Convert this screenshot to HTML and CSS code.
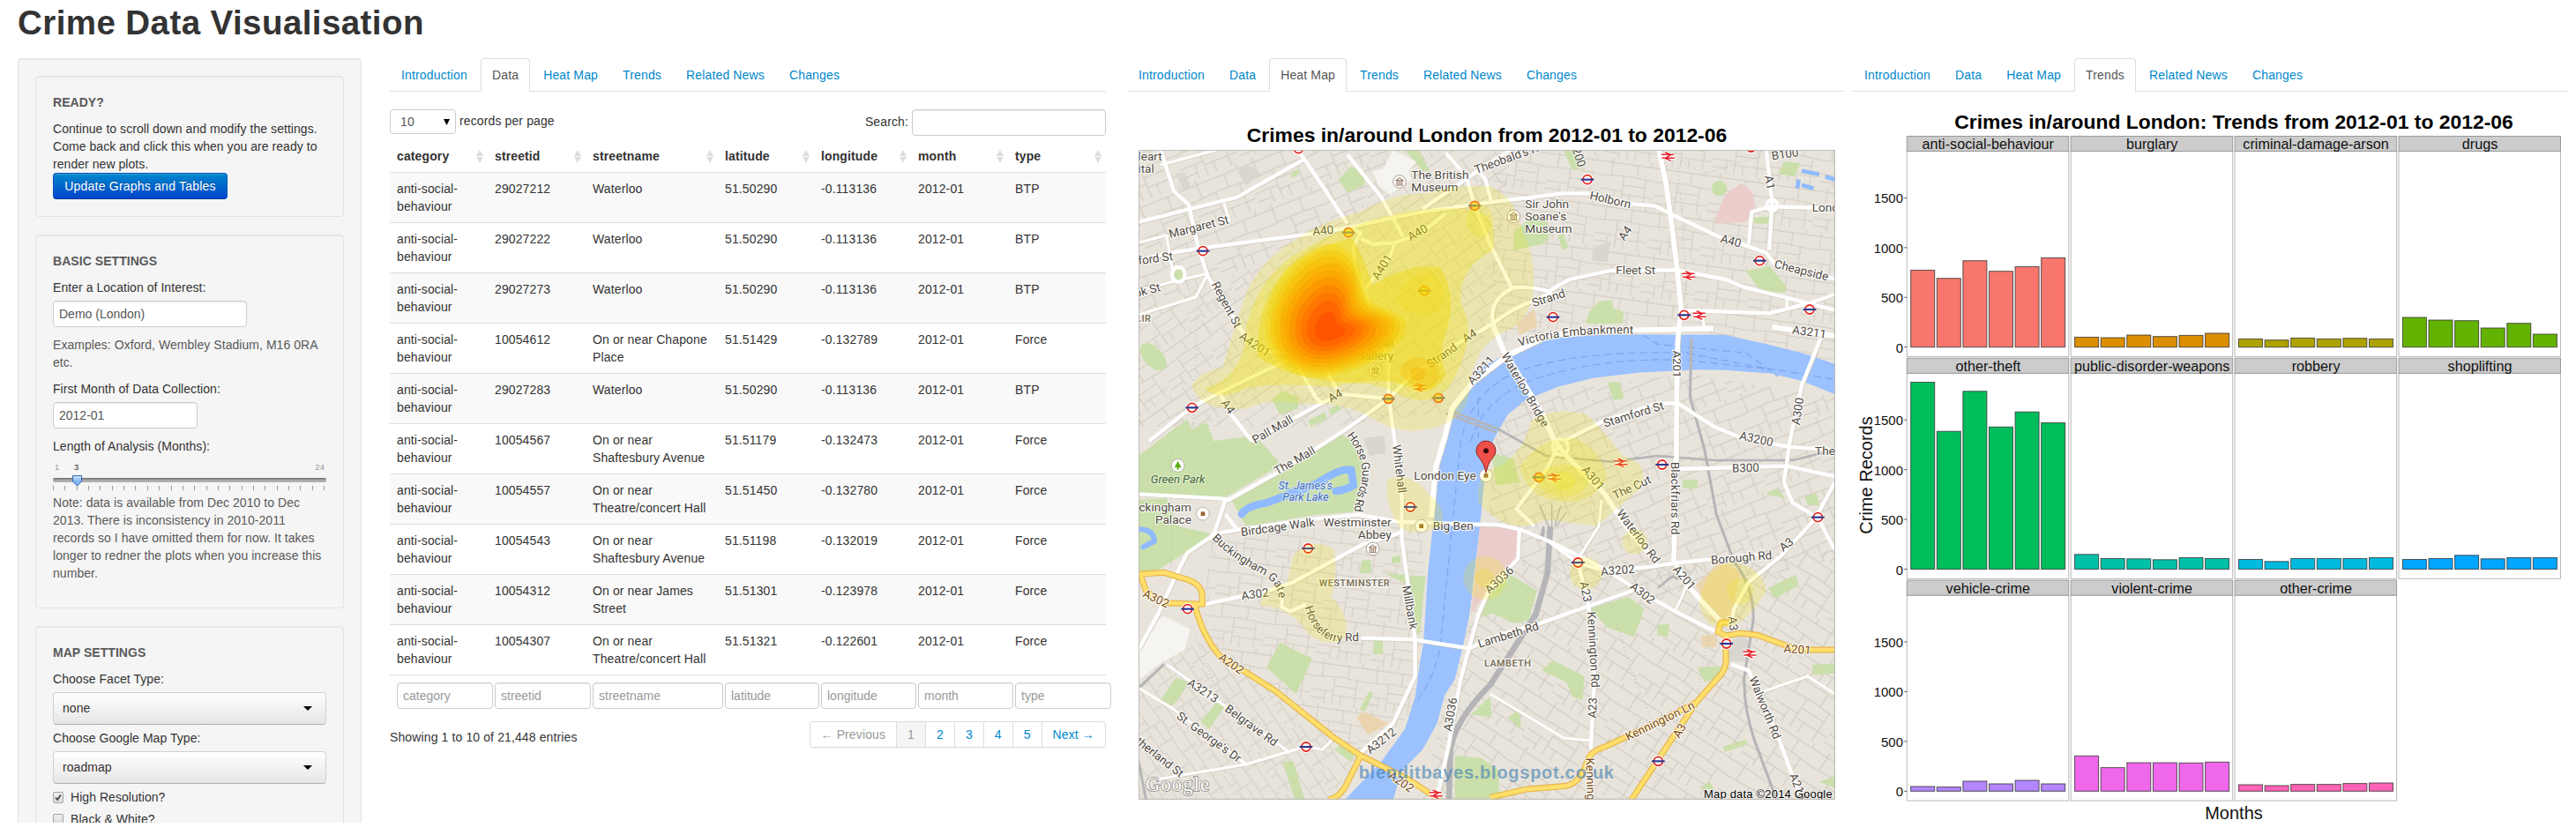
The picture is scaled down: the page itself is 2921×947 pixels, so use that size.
FILE: index.html
```html
<!DOCTYPE html>
<html lang="en">
<head>
<meta charset="utf-8">
<title>Crime Data Visualisation</title>
<link rel="stylesheet" href="styles.css">
</head>
<body>
<h1 class="page-title">Crime Data Visualisation</h1>
<main class="layout">
  <aside class="well sidebar">
    <section class="well">
      <p class="heading">READY?</p>
      <div>Continue to scroll down and modify the settings. Come back and click this when you are ready to render new plots.</div>
      <button class="btn-primary">Update Graphs and Tables</button>
    </section>
    <section class="well">
      <p class="heading">BASIC SETTINGS</p>
      <label>Enter a Location of Interest:</label>
      <input class="field location" type="text" value="Demo (London)">
      <p class="help">Examples: Oxford, Wembley Stadium, M16 0RA etc.</p>
      <label>First Month of Data Collection:</label>
      <input class="field month" type="text" value="2012-01">
      <label class="flush">Length of Analysis (Months):</label>
      <svg class="slider" viewBox="0 0 310 44">
        <defs>
          <linearGradient id="track" x2="0" y2="1"><stop offset="0" stop-color="#666"/><stop offset=".5" stop-color="#a8a8a8"/><stop offset="1" stop-color="#b4b4b4"/></linearGradient>
          <linearGradient id="knob" x2="0" y2="1"><stop offset="0" stop-color="#d4e8fb"/><stop offset=".45" stop-color="#8dbff0"/><stop offset="1" stop-color="#6faef0"/></linearGradient>
        </defs>
        <text x="2" y="17" class="dim">1</text><text x="24" y="17" class="now">3</text><text x="308" y="17" text-anchor="end" class="dim">24</text>
        <rect x="0" y="26" width="310" height="5" rx="2" fill="url(#track)"/>
        <g id="ticks" stroke="#999"></g>
        <path d="M22.5 23.5h10v6.500l-5 5-5-5z" fill="url(#knob)" stroke="#3c63b8"/>
      </svg>
      <p class="help">Note: data is available from Dec 2010 to Dec 2013. There is inconsistency in 2010-2011 records so I have omitted them for now. It takes longer to redner the plots when you increase this number.</p>
    </section>
    <section class="well">
      <p class="heading">MAP SETTINGS</p>
      <label>Choose Facet Type:</label>
      <div class="picker">none<svg width="10" height="5"><path d="M0 0h10l-5 5z"/></svg></div>
      <label>Choose Google Map Type:</label>
      <div class="picker">roadmap<svg width="10" height="5"><path d="M0 0h10l-5 5z"/></svg></div>
      <div class="check"><span class="box"><svg viewBox="0 0 12 12"><path d="M2.500 6l2.500 3 4.500-6.500" fill="none" stroke="#444" stroke-width="2.200"/></svg></span>High Resolution?</div>
      <div class="check"><span class="box"></span>Black &amp; White?</div>
    </section>
  </aside>

  <section class="panel data">
    <nav class="tabs"><a>Introduction</a><a class="active">Data</a><a>Heat Map</a><a>Trends</a><a>Related News</a><a>Changes</a></nav>
    <div class="controls">
      <span class="length">10<svg width="7" height="7"><path d="M0 0h7l-3.500 7z"/></svg></span><span class="per">records per page</span>
      <span class="search">Search:</span><input class="field" type="text">
    </div>
    <table>
      <colgroup><col class="w111"><col class="w111"><col class="w150"><col class="w109"><col class="w110"><col class="w110"><col class="w111"></colgroup>
      <thead><tr><th>category</th><th>streetid</th><th>streetname</th><th>latitude</th><th>longitude</th><th>month</th><th>type</th></tr></thead>
      <tbody>
      <tr><td>anti-social-behaviour</td><td>29027212</td><td>Waterloo</td><td>51.50290</td><td>-0.113136</td><td>2012-01</td><td>BTP</td></tr>
      <tr><td>anti-social-behaviour</td><td>29027222</td><td>Waterloo</td><td>51.50290</td><td>-0.113136</td><td>2012-01</td><td>BTP</td></tr>
      <tr><td>anti-social-behaviour</td><td>29027273</td><td>Waterloo</td><td>51.50290</td><td>-0.113136</td><td>2012-01</td><td>BTP</td></tr>
      <tr><td>anti-social-behaviour</td><td>10054612</td><td>On or near Chapone Place</td><td>51.51429</td><td>-0.132789</td><td>2012-01</td><td>Force</td></tr>
      <tr><td>anti-social-behaviour</td><td>29027283</td><td>Waterloo</td><td>51.50290</td><td>-0.113136</td><td>2012-01</td><td>BTP</td></tr>
      <tr><td>anti-social-behaviour</td><td>10054567</td><td>On or near Shaftesbury Avenue</td><td>51.51179</td><td>-0.132473</td><td>2012-01</td><td>Force</td></tr>
      <tr><td>anti-social-behaviour</td><td>10054557</td><td>On or near Theatre/concert Hall</td><td>51.51450</td><td>-0.132780</td><td>2012-01</td><td>Force</td></tr>
      <tr><td>anti-social-behaviour</td><td>10054543</td><td>On or near Shaftesbury Avenue</td><td>51.51198</td><td>-0.132019</td><td>2012-01</td><td>Force</td></tr>
      <tr><td>anti-social-behaviour</td><td>10054312</td><td>On or near James Street</td><td>51.51301</td><td>-0.123978</td><td>2012-01</td><td>Force</td></tr>
      <tr><td>anti-social-behaviour</td><td>10054307</td><td>On or near Theatre/concert Hall</td><td>51.51321</td><td>-0.122601</td><td>2012-01</td><td>Force</td></tr>
      </tbody>
      <tfoot><tr>
        <td><input class="field" placeholder="category"></td><td><input class="field" placeholder="streetid"></td><td><input class="field" placeholder="streetname"></td><td><input class="field" placeholder="latitude"></td><td><input class="field" placeholder="longitude"></td><td><input class="field" placeholder="month"></td><td><input class="field" placeholder="type"></td>
      </tr></tfoot>
    </table>
    <div class="table-footer">
      <span class="info">Showing 1 to 10 of 21,448 entries</span>
      <div class="pagination"><a class="off">← Previous</a><a class="off current">1</a><a>2</a><a>3</a><a>4</a><a>5</a><a>Next →</a></div>
    </div>
  </section>

  <section class="panel heat">
    <nav class="tabs"><a>Introduction</a><a>Data</a><a class="active">Heat Map</a><a>Trends</a><a>Related News</a><a>Changes</a></nav>
    <h2 class="plot-title map-title">Crimes in/around London from 2012-01 to 2012-06</h2>
    <svg class="map" viewBox="34 359 2370 2211">
      <defs>
        <pattern id="mesh" width="230" height="190" patternUnits="userSpaceOnUse"><path class="lane" d="M0 20H230M0 78L120 70 230 78M0 135H95M95 150H230M40 0V78M95 75V190M150 20V72M190 72V190M60 135V190M0 168H60M130 150V190M205 0V20M150 110H190M95 110L150 110"/></pattern>
        <pattern id="meshB" href="#mesh" patternTransform="rotate(-22) scale(.9)"/>
        <pattern id="meshC" href="#mesh" patternTransform="rotate(33) scale(.95)"/>
        <pattern id="meshD" href="#mesh" patternTransform="rotate(-35) scale(.8)"/>
        <pattern id="meshE" href="#mesh" patternTransform="rotate(8) scale(.8)"/>
        <pattern id="meshF" href="#mesh" patternTransform="rotate(56) scale(.75)"/>
        <g id="tube"><circle r="15" fill="#fff" stroke="#fff" stroke-width="12"/><circle r="15" fill="#fff" stroke="#e1251b" stroke-width="5.500"/><path d="M-22 0H22" stroke="#2b3990" stroke-width="6.500"/></g>
        <g id="tubeHot"><circle r="15" fill="#fbdc5a" stroke="#f0561b" stroke-width="5.500"/><path d="M-22 0H22" stroke="#77736c" stroke-width="6.500"/></g>
        <g id="rail" fill="none" stroke="#fff" stroke-width="12"><path d="M-20-6H20M-20 6H20M-12-14L10-4-10 6 12 15"/><path d="M-22-6H20M-20 6H22M-10-14L10-5-10 6 10 15" stroke="#e8202a" stroke-width="4.500"/></g>
        <g id="museum"><circle r="22" fill="#fff" stroke="#aaa29a" stroke-width="3"/><path d="M-13-4L0-13 13-4ZM-12 12H12M-9-2V10M-3-2V10M3-2V10M9-2V10" fill="none" stroke="#8a6a50" stroke-width="3"/></g>
        <g id="sight"><circle r="22" fill="#fff" stroke="#bbb4aa" stroke-width="3"/><path d="M-7-7H7V7H-7z" fill="#9c6433"/></g>
        <path id="hot" d="M-20-258C50-278 90-215 100-165C108-100 130-82 170-68C220-50 236-35 232-5C225 60 100 122-10 138C-120 146-190 85-190-10C-190-110-110-232-20-258Z"/>
        <g id="roads">
          <path d="M110 359L155 500 205 545 235 680 270 790 340 900 385 975 430 1035 480 1045 550 1052 640 1205 655 1218"/>
          <path d="M34 735L130 712 250 693 620 645 745 625 900 590 1000 570 1230 537 1480 507 1570 508 1710 543 1790 550 1850 580 2010 655 2100 685 2170 710 2200 750 2403 798"/>
          <path d="M34 605L210 560 370 520 600 390M575 359L605 400 745 610 M745 625L790 640 765 690 770 760 805 840 850 980 885 1080V1200"/>
          <path d="M790 660L830 680 910 675 1000 640 1080 575M905 680L890 720 800 840M745 375L860 520 935 655"/>
          <path d="M1080 370L1150 450 1175 540 1230 680 1305 830M1000 560L1190 430 1300 359M1190 430L1215 460 1235 540"/>
          <path d="M1305 830Q1350 820 1430 840L1500 800 1640 770 1860 768 1900 775 2030 800 2090 825 2230 860 2403 905M1305 830Q1225 870 1240 950Q1300 900 1380 872L1440 845M1240 950L1100 1030 960 1130 885 1205 740 1310"/>
          <path stroke-width="18" d="M1030 1610L1045 1440 1075 1340 1100 1240 1170 1150 1290 1058 1430 990 1640 974 1990 967M2190 962L2403 992"/>
          <path stroke-width="18" d="M1240 955L1275 1040 1410 1260 1450 1350 1490 1400 1620 1530 1700 1650 1800 1765"/>
          <path d="M1480 1350L1620 1280 1800 1222 1870 1222 1990 1300 2100 1345 2250 1370 2403 1380"/>
          <path stroke-width="17" d="M1805 359L1830 480 1845 590 1865 750 1880 900 1868 1010 1865 1240 1862 1560 1855 1755 1900 1840 2020 1970"/>
          <path d="M280 1668L380 1650 640 1615 780 1600 920 1625 1260 1635 1330 1650 1430 1690 1530 1765 1620 1790 1760 1780 1860 1765 2050 1745 2160 1735"/>
          <path d="M1330 1650L1325 1750 1230 1850 1190 1940 1160 2050 1130 2160 1090 2380 1050 2560M1460 1370L1420 1450 1320 1580 1380 1640"/>
          <path d="M34 1530L310 1545 340 1550 520 1450 740 1310M420 1350L650 1225M720 1190L880 1205M70 1350L215 1235 310 1185 550 1070M310 1185L350 1260 420 1350M655 1080L720 1190 650 1225"/>
          <path d="M885 1200L905 1340 930 1540 930 1680 955 1870 975 2020 975 2150 900 2310 790 2410"/>
          <path d="M260 1905L470 1860 560 1830 800 1700 870 1680 930 1660M34 2060L100 1940 160 1810 200 1730 290 1670 330 1550M330 1600L370 1650M522 1850V1915L550 1930 605 1905"/>
          <path d="M790 2020L970 2025 1160 2055 1260 2010 1400 1970 1570 1910 1740 1850M1530 1765L1565 1910 1585 2060 1583 2200 1573 2400M1430 1690L1630 1790 1720 1850 1860 1930 2000 2000"/>
          <path d="M2355 1000L2290 1160 2250 1350 2230 1490 2260 1560 2340 1608 2403 1490M1870 1445L2240 1435 2403 1470M2340 1610L2220 1740 2110 1830 2060 1920 2050 1970M2345 1610L2403 1720"/>
          <path d="M2170 359L2190 540 2180 700M2190 550L2120 570 2110 680M2190 552L2403 558M1890 905L2180 915 2320 880 2403 850M2050 2110L2110 2130 2200 2330 2290 2571"/>
          <path stroke-width="9" d="M2150 2205L2310 2150 2403 2210M1230 2210L1480 2360 1575 2370M130 2110L550 2410M34 2190L150 2260 400 2450M100 2500L400 2450 600 2390 660 2400 700 2360M34 675L130 650 150 770M34 840L160 805 270 780 230 860 34 920M110 410L300 359M325 540L345 605M1610 1550L1600 1640 1530 1750M1860 1930L1900 1840M1950 905L1960 970M2240 860V900"/>
          <circle cx="1470" cy="1370" r="26" fill="none"/><circle cx="2190" cy="548" r="18" fill="none"/><ellipse cx="170" cy="783" rx="22" ry="25" fill="#cadfaa"/>
        </g>
        <g id="trunk">
          <path d="M34 1803L120 1797 180 1815Q245 1830 250 1870L252 1905 120 1900M40 1803L60 1860 100 1890M225 1905Q250 2010 310 2080L500 2200 700 2360 790 2420 950 2500 1060 2571M790 2420L740 2520Q720 2560 680 2571"/>
          <path d="M1230 2562L1350 2535 1490 2523Q1540 2510 1560 2440Q1570 2405 1620 2390L1760 2325 1930 2240M1710 2571L1930 2240 2010 2150Q2030 2130 2032 2100V2010M2045 1967H2015L2005 2000 2035 2012 2080 2003 2140 2010 2250 2050 2280 2060H2403"/>
        </g>
        <path id="pHorse" d="M742 1330Q812 1420 790 1500Q768 1550 768 1600"/>
        <path id="pFerry" d="M600 1915Q632 2030 720 2032L810 2030"/>
        <path id="pGate" d="M283 1682Q350 1750 440 1795Q510 1830 510 1880"/>
        <path id="pVic" d="M1330 1028Q1480 978 1740 985"/>
      </defs>
      <rect x="34" y="359" width="2370" height="2212" fill="#e8e4dc"/>
      <path d="M34 359H900L750 620 340 800 34 900Z" fill="url(#meshB)"/>
      <path d="M34 900L340 800 750 620 900 359 1300 359 1240 950 1080 1250 700 1300 34 1300Z" fill="url(#meshD)"/>
      <path d="M1240 359H2403V1080L1850 985 1240 1010Z" fill="url(#meshE)"/>
      <path d="M1250 1200L1900 1120 2403 1200V1750L1800 1900 1220 1740Z" fill="url(#meshB)"/>
      <path d="M1180 1750L1800 1760 2403 1720V2571H1000Z" fill="url(#meshC)"/>
      <path d="M280 1680L1000 1620V2250L780 2420 250 2010Z" fill="url(#meshE)"/>
      <path d="M34 2120L280 2020 780 2420 690 2571H34Z" fill="url(#meshF)"/>
      <g fill="#cadfaa">
        <path d="M34 1400L200 1275 215 1310 265 1285 290 1350 430 1330 520 1430 330 1540 34 1525Z"/>
        <path d="M34 1550L130 1545 170 1640 280 1665 200 1725 90 1795 34 1790Z"/>
        <path d="M350 1550L500 1460 720 1325 750 1340 800 1420 775 1590 640 1600 400 1640Z"/>
        <path d="M715 460L755 415 810 440 800 480 745 505ZM490 1210L520 1180 580 1200 575 1240 515 1260ZM610 1280L670 1250 675 1275 620 1300ZM680 1245L710 1225 725 1240 690 1262ZM550 440L575 425 582 440 558 455ZM940 359H985L1025 430 1000 430Z"/>
        <path d="M1310 640L1380 580 1425 600 1430 660 1410 680 1310 700ZM1460 650L1480 645 1495 690 1475 700ZM1590 715L1620 708 1622 735 1595 738ZM1555 950L1568 910 1600 875 1645 870 1650 900 1685 910 1680 950ZM1630 1150L1670 1148 1685 1205 1650 1210Z"/>
        <path d="M2210 440L2230 398 2285 405 2265 450ZM2100 770L2180 755 2235 820 2235 845 2150 840ZM2125 590L2180 585 2175 610 2130 610ZM1480 359H1530L1540 420 1510 430Z"/><circle cx="2010" cy="490" r="26"/>
        <path d="M1200 1950L1230 1850 1290 1800 1390 1860 1360 1960 1310 1970 1240 1935ZM1570 1920L1700 1880 1755 1920 1720 2015 1630 1985ZM470 2120L515 2035 625 2090 570 2210ZM110 2230L160 2155 210 2170 150 2250ZM245 2305L300 2240 325 2255 275 2330ZM525 2440L560 2438 600 2571H565ZM870 1800L1010 1810 990 2010 975 2000 955 1840ZM785 1800L795 1755 825 1755 825 1800ZM895 1745L925 1740V1765H895ZM835 2025H865V2075H832Z"/>
        <path d="M785 2265L820 2200 832 2210 805 2268ZM700 2400L720 2385 770 2415 755 2440ZM1110 2420L1200 2428 1260 2470V2571H1110ZM1165 2280L1230 2220 1235 2290ZM1405 2130L1445 2095 1550 2150 1545 2230 1510 2220 1490 2170ZM1290 2290L1330 2265 1335 2330ZM2175 1850L2270 1805 2280 1840 2200 1885ZM2165 1530L2205 1510 2235 1545ZM2300 1540L2340 1525 2350 1570 2310 1565ZM1885 1480H1935V1510H1885ZM1800 1975L1840 1970 1835 2015 1798 2010ZM1935 2120L2040 2115 1990 2160 1960 2170ZM2325 2110L2403 2108V2140L2330 2145ZM2020 2390L2100 2365 2105 2380 2030 2408ZM2350 2510L2403 2490V2530ZM1940 2530L1980 2510 1990 2535ZM1235 1390L1310 1410 1330 1490 1250 1500Z"/>
        <ellipse cx="84" cy="1063" rx="56" ry="32" transform="rotate(48 84 1063)"/>
      </g>
      <path d="M1195 1640L1332 1640 1322 1750 1235 1840 1165 1940ZM2030 510L2085 472 2120 500 2135 560 2100 605 1990 610Z" fill="#ebcdcb"/>
      <path d="M1930 1840L2010 1760 2080 1790 2050 1960 1990 1960ZM1950 2010H2000V2050H1950ZM1320 950L1380 900 1390 960 1330 990ZM775 2290L800 2270 885 2310 815 2350Z" fill="#ebd5b0"/>
      <path d="M2040 2030L2100 2015 2120 2060 2100 2100 2040 2100ZM370 430L400 405 450 440 400 480ZM160 440L190 435 215 490 190 500ZM1580 690L1640 670 1630 740 1575 735ZM800 1340L870 1330 875 1390 820 1400Z" fill="#d9d5cf"/>
      <path d="M830 430L865 425 900 360 980 400 950 430 965 460 890 512 850 480ZM120 1945L210 1990 190 2060 110 2105 40 2160 34 2050 100 1960Z" fill="#f5f4f1"/>
      <path fill="#9bc1ff" d="M735 2571L860 2440 940 2330 975 2220 990 2110 1003 2040 1018 1800 1040 1600 1065 1380 1085 1310 1115 1230 1160 1150 1210 1095 1270 1062 1330 1035 1430 1005 1520 992 1630 987 2030 988 2180 1022 2290 1050 2403 1087V1190L2290 1145 2190 1120 2030 1108 1930 1107 1730 1117 1580 1135 1460 1165 1350 1210 1290 1260 1255 1320 1240 1350 1210 1490 1195 1640 1180 1770 1160 1940 1135 2060 1110 2160 1075 2215 1050 2310 1000 2400 930 2470 900 2571Z"/>
      <g fill="none" stroke="#8fbaff" stroke-width="26" stroke-linecap="round"><path d="M385 1598Q400 1572 470 1560L640 1495Q720 1440 758 1448L765 1500Q745 1515 705 1520"/><path d="M36 1650Q85 1650 88 1690L50 1710" stroke-width="18"/><path d="M2290 430L2350 442M2370 450L2403 460M2280 460L2275 490M2290 478L2330 490" stroke-width="14" stroke-linecap="butt"/></g>
      <g fill="none" stroke="#7ba6ee" stroke-width="3.500" stroke-dasharray="26 14"><path d="M985 2230Q1060 2120 1065 2000L1130 1350Q1170 1180 1310 1120Q1500 1040 1900 1050L2100 1090 2403 1140M1165 1350Q1200 1220 1350 1150Q1600 1060 1900 1075L2180 1105M1190 1200V1340M1750 990L1800 1020 2100 1050 2210 1130"/></g>
      <g fill="none" stroke="#b5b5b7"><path stroke-width="20" d="M1435 1640L1425 1800 1385 1940 1230 2180Q1110 2300 1095 2400L1090 2571"/><path stroke-width="8" d="M1090 1245L1260 1310 1420 1400 1640 1420 1800 1400 1990 1415 2260 1415 2403 1380M1080 1255L1250 1320M1410 1690L1412 1640 1400 1690M1800 1850L1850 1810 1870 1820"/><path stroke-width="9" d="M1915 1000L1910 1200 1960 1380 2000 1600 2060 1760Q2130 1850 2125 1960L2095 2150Q2090 2250 2130 2370L2205 2571M34 2190L120 2110M34 2440L60 2571"/><path stroke-width="4" d="M1430 1640L1400 1570M1440 1640L1440 1560M1450 1640L1470 1570M1455 1640L1490 1590"/><path stroke-width="3" stroke-dasharray="3 10" d="M220 1300L235 860M1870 420L1900 850M145 1360V1780M230 2020L300 2200 560 2400M1640 1900L1700 2100 1780 2300M1980 1950L1930 2250 1760 2571M1280 1460L1440 1390M1870 390L1960 440 2150 380M650 1120L620 1240"/></g>
      <use href="#roads" class="road casing"/><use href="#roads" class="road"/>
      <use href="#trunk" class="trunk-casing"/><use href="#trunk" class="trunk"/>

      <g class="label">
        <text x="32" y="395">leart</text><text x="32" y="436">ital</text><text x="962" y="458">The British</text><text x="962" y="501">Museum</text>
        <text x="1349" y="557">Sir John</text><text x="1349" y="598">Soane's</text><text x="1349" y="640">Museum</text><text x="2325" y="570">London</text><text x="2335" y="1398">The</text><text x="1035" y="1652">Big Ben</text>
        <g text-anchor="end"><text x="902" y="1032">The National</text><text x="902" y="1074">Gallery</text><text x="214" y="1590">Buckingham</text><text x="214" y="1631">Palace</text><text x="1182" y="1480">London Eye</text><text x="894" y="1640">Westminster</text><text x="894" y="1682">Abbey</text></g>
      </g>
      <g id="labels" class="label street" text-anchor="middle"></g>
      <g class="label street"><text><textPath href="#pHorse" textLength="276">Horse Guards Rd</textPath></text><text><textPath href="#pFerry">Horseferry Rd</textPath></text><text><textPath href="#pGate">Buckingham Gate</textPath></text><text><textPath href="#pVic" textLength="392">Victoria Embankment</textPath></text></g>
      <g class="label area"><text x="34" y="945">.IR</text><text x="648" y="1844">WESTMINSTER</text><text x="1210" y="2116">LAMBETH</text></g>
      <g class="label park" text-anchor="middle"><text x="168" y="1494">Green Park</text><g class="lake"><text x="602" y="1515">St. James's</text><text x="602" y="1552">Park Lake</text></g></g>

      <g id="stations"></g>
      <use href="#museum" x="922" y="467"/><use href="#museum" x="1310" y="585"/><use href="#museum" x="840" y="1108"/><use href="#museum" x="831" y="1716"/>
      <use href="#sight" x="253" y="1597"/><use href="#sight" x="996" y="1639"/><use href="#sight" x="1216" y="1467"/>
      <circle cx="168" cy="1433" r="22" fill="#fff" stroke="#bbb4aa" stroke-width="3"/><path d="M168 1417L180 1440H171V1447H165V1440H156Z" fill="#5fae16"/>

      <g fill="#f5e500" fill-opacity=".2">
        <path d="M215 1160Q240 1115 320 1100Q350 1000 395 860Q440 740 560 670Q660 600 790 570Q880 510 1020 505Q1120 475 1230 482Q1320 520 1340 640Q1390 720 1375 860Q1350 960 1260 985Q1180 1040 1160 1150Q1165 1250 1080 1290Q960 1340 860 1290Q740 1210 600 1225Q480 1200 400 1240Q240 1250 215 1160Z"/>
        <path fill-opacity=".28" d="M260 1170Q400 1130 400 960Q440 800 560 720Q700 630 860 590Q1000 550 1160 560Q1260 570 1240 700Q1120 760 1130 880Q1190 980 1110 1130Q1060 1240 940 1200Q820 1130 700 1165Q480 1150 400 1170Q300 1220 260 1170Z"/>
        <path fill="#f5d800" fill-opacity=".4" d="M440 1060Q430 880 540 760Q650 680 760 660Q800 720 830 820Q960 740 1060 760Q1120 850 1080 980Q1050 1060 1080 1120Q1050 1190 980 1180Q900 1130 780 1150Q560 1150 440 1060Z"/>
        <path fill="#f5d800" d="M915 880Q930 780 1030 780Q1090 820 1060 900Q1000 950 915 880Z"/><path d="M920 1110Q960 1040 1040 1080Q1080 1130 1030 1170Q960 1180 920 1110Z" fill="#f5bd00" fill-opacity=".35"/><ellipse cx="985" cy="1120" rx="26" ry="24" fill="#f5b000" fill-opacity=".35"/><ellipse cx="1195" cy="600" rx="45" ry="55"/>
        <path d="M1190 1560Q1180 1450 1250 1440Q1340 1400 1370 1280Q1450 1230 1560 1260Q1640 1340 1680 1400Q1780 1430 1740 1510Q1660 1580 1590 1640Q1480 1620 1410 1620Q1300 1680 1190 1560Z"/>
        <path d="M1330 1440Q1400 1330 1520 1340Q1620 1390 1625 1480Q1560 1580 1450 1550Q1360 1540 1330 1440Z"/><ellipse cx="1480" cy="1485" rx="85" ry="55"/><ellipse cx="1480" cy="1485" rx="40" ry="32"/>
        <path d="M1940 1900Q1960 1780 2050 1760Q2160 1780 2170 1860Q2100 1970 2050 1980Q1960 2000 1940 1900Z"/><circle cx="2080" cy="1860" r="45"/>
        <path d="M560 1740Q620 1670 700 1720Q710 1820 690 1880Q760 1950 735 2020Q660 2060 600 1990Q540 1910 450 1910Q440 1850 540 1830Z"/><path d="M880 1480Q960 1450 1020 1530Q1090 1580 1060 1640Q960 1680 920 1640Q870 1560 880 1480Z"/><circle cx="1213" cy="1815" r="74"/><circle cx="1210" cy="1815" r="32"/><circle cx="1555" cy="1800" r="55"/><circle cx="1722" cy="1692" r="42"/>
      </g>
      <g transform="translate(680 975)">
        <use href="#hot" transform="scale(1.130)" fill="#f5d000" opacity=".35"/><use href="#hot" transform="scale(1.050)" fill="#f8c000" opacity=".4"/><use href="#hot" transform="scale(.97)" fill="#fbb400" opacity=".45"/><use href="#hot" transform="scale(.88)" fill="#fba800" opacity=".5"/><use href="#hot" transform="scale(.79)" fill="#fd9c00" opacity=".5"/><use href="#hot" transform="scale(.7)" fill="#fe8c00" opacity=".55"/><use href="#hot" transform="scale(.6)" fill="#ff7c00" opacity=".6"/><use href="#hot" transform="scale(.5)" fill="#ff6c00" opacity=".6"/><use href="#hot" transform="scale(.39)" fill="#ff6000" opacity=".7"/><use href="#hot" transform="scale(.25)" fill="#ff5000" opacity=".8"/>
      </g>
      <path d="M1216 1458Q1210 1425 1192 1405A33 33 0 1 1 1240 1405Q1222 1425 1216 1458Z" fill="#f0504a" stroke="#8e2420" stroke-width="3"/><circle cx="1216" cy="1383" r="9" fill="#3b0d0c"/>
      <text class="watermark" x="783" y="2498" textLength="868">blenditbayes.blogspot.co.uk</text>
      <text class="logo" x="58" y="2540" textLength="216">Google</text>
      <text class="credit" x="1957" y="2565" textLength="437">Map data ©2014 Google</text>
      <rect x="35" y="360" width="2367" height="2208" fill="none" stroke="#b9b7b3" stroke-width="3"/>
    </svg>
  </section>

  <section class="panel trends">
    <nav class="tabs"><a>Introduction</a><a>Data</a><a>Heat Map</a><a class="active">Trends</a><a>Related News</a><a>Changes</a></nav>
    <h2 class="plot-title trends-title">Crimes in/around London: Trends from 2012-01 to 2012-06</h2>
    <svg class="facets" viewBox="2101 150 812 783">
      <g id="facets"></g>
      <text class="axis-title" x="2533" y="929" text-anchor="middle">Months</text>
      <text class="axis-title" transform="translate(2123 539) rotate(-90)" text-anchor="middle">Crime Records</text>
    </svg>
  </section>
</main>
<script src="charts.js"></script>
</body>
</html>
```
FILE: styles.css
```css
* { box-sizing: border-box; }
body { margin: 0; height: 947px; background: #fff; color: #333; font: 14px/20px "Liberation Sans", Arial, sans-serif; overflow: hidden; }
p { margin: 0; }
.page-title { margin: 0; padding: 6px 20px 0; height: 66px; font-size: 38.5px; line-height: 40px; font-weight: bold; letter-spacing: .42px; }
.layout { display: flex; align-items: flex-start; height: 867px; padding-left: 20px; }
.well { background: #f5f5f5; border: 1px solid #e3e3e3; border-radius: 4px; padding: 19px; margin-bottom: 20px; box-shadow: inset 0 1px 1px rgba(0,0,0,.05); }
.sidebar { width: 390px; height: 867px; margin: 0 32px 0 0; overflow: hidden; border-bottom: 0; border-radius: 4px 4px 0 0; flex: none; letter-spacing: .05px; }
.heading { font-weight: bold; color: #5a5a5a; margin-bottom: 10px; }
.btn-primary { display: block; width: 198px; height: 30px; padding: 0; border: 1px solid #0055b3; border-bottom-color: #003a9e; border-radius: 4px; background: linear-gradient(#08c, #04c); color: #fff; font: inherit; letter-spacing: .22px; text-shadow: 0 -1px 0 rgba(0,0,0,.25); box-shadow: inset 0 1px 0 rgba(255,255,255,.2); }
label { display: block; margin-bottom: 5px; }
label.flush { margin-bottom: 0; }
.field { display: block; box-sizing: content-box; height: 20px; padding: 4px 6px; border: 1px solid #ccc; border-radius: 4px; background: #fff; color: #555; font: inherit; box-shadow: inset 0 1px 1px rgba(0,0,0,.075); }
.field::placeholder { color: #999; opacity: 1; }
.location { width: 206px; margin-bottom: 10px; }
.month { width: 150px; margin-bottom: 10px; }
.help { color: #595959; margin-bottom: 10px; }
.slider { display: block; width: 310px; height: 44px; font-size: 9.5px; }
.dim { fill: #999; }
.now { fill: #333; }
.picker { display: flex; align-items: center; justify-content: space-between; height: 37px; padding: 0 15px 2px 10px; margin-bottom: 5px; border: 1px solid #d0d0d0; border-bottom-color: #b0b0b0; border-radius: 4px; background: linear-gradient(#fefefe, #e6e6e6); }
.picker svg { margin-top: 1px; }
.check { display: flex; align-items: center; gap: 8px; height: 20px; margin: 5px 0; }
.box { width: 12px; height: 13px; border: 1px solid #a5a5a5; border-radius: 2px; background: linear-gradient(#eee, #dcdcdc); }
.box svg { display: block; width: 10px; height: 11px; }
.panel { width: 812px; flex: none; }
.data { margin-right: 24px; letter-spacing: .12px; }
.heat { margin-right: 11px; }
.tabs { display: flex; height: 38px; border-bottom: 1px solid #ddd; color: #08c; letter-spacing: .15px; }
.tabs a { height: 38px; padding: 8px 12px; border: 1px solid transparent; border-radius: 4px 4px 0 0; margin-right: 2px; }
.tabs a.active { color: #555; background: #fff; border-color: #ddd #ddd #fff; }
.controls { display: flex; align-items: flex-start; height: 35px; margin-top: 20px; }
.length { display: flex; align-items: center; justify-content: space-between; width: 75px; height: 28px; padding: 0 6px 0 11px; border: 1px solid #ccc; border-radius: 4px; color: #555; }
.per { padding: 3px 0 0 4px; }
.search { margin-left: auto; padding: 4px 4px 0 0; }
.controls .field { width: 206px; }
table { width: 812px; table-layout: fixed; border-collapse: separate; border-spacing: 0; }
.w109 { width: 109px; }
.w110 { width: 110px; }
.w111 { width: 111px; }
.w150 { width: 150px; }
th { padding: 8px; text-align: left; position: relative; }
th::before, th::after { content: ""; position: absolute; right: 5px; border: 4px solid transparent; border-top-width: 0; border-bottom: 7px solid #ddd; top: 11px; }
th::after { border-top: 7px solid #ddd; border-bottom-width: 0; top: 19px; }
td { padding: 8px; vertical-align: top; border-top: 1px solid #ddd; }
tbody tr:nth-child(odd) td { background: #f9f9f9; }
tbody td:nth-child(3) { padding-right: 4px; }
tfoot td { padding-bottom: 0; }
tfoot .field { width: 100%; }
.table-footer { display: flex; justify-content: space-between; align-items: flex-start; margin-top: 14px; }
.info { padding-top: 8px; }
.pagination { display: flex; border: 1px solid #ddd; border-radius: 4px; box-shadow: 0 1px 2px rgba(0,0,0,.05); color: #08c; }
.pagination a { padding: 4px 12px; border-left: 1px solid #ddd; }
.pagination a:first-child { border-left: 0; }
.pagination .off { color: #999; }
.pagination .current { background: #f5f5f5; }
.plot-title { margin: 0; font-size: 22.9px; line-height: 24px; font-weight: bold; color: #000; text-align: center; white-space: nowrap; }
.map-title { margin: 37px 9px 5px 13px; }
.map { display: block; width: 790px; height: 737px; margin-left: 13px; }
.trends-title { margin: 22px 9px 0 61px; }
.facets { display: block; width: 812px; height: 783px; }
.lane { fill: none; stroke: #d3cdc1; stroke-width: 4; }
.road { fill: none; stroke: #fff; stroke-width: 13; stroke-linejoin: round; }
.casing { stroke: #d2cbbd; transform: translate(2px, 2px); }
.trunk, .trunk-casing { fill: none; stroke: #e6b54a; stroke-width: 21; stroke-linejoin: round; }
.trunk { stroke: #ffdf6b; stroke-width: 14; }
.label { font: 41px Roboto, sans-serif; fill: #504a42; stroke: #fff; stroke-width: 7; stroke-opacity: .85; paint-order: stroke; stroke-linejoin: round; }
.street { font-size: 40px; }
.area { font-size: 33px; font-weight: 700; fill: #85775f; letter-spacing: 1px; }
.park { font-style: italic; fill: #45663c; stroke: #e2efd0; font-size: 39px; }
.lake { fill: #4a6fb5; font-size: 37px; stroke: #d6e6fb; }
.watermark { font: bold 60px "Liberation Sans", sans-serif; fill: #4682b4; fill-opacity: .65; }
.logo { font: 68px "Liberation Serif", serif; fill: #fff; stroke: #8d8a86; stroke-width: 5; paint-order: stroke; }
.credit { font: 39px "Liberation Sans", sans-serif; fill: #000; stroke: #fff; stroke-width: 5; stroke-opacity: .7; paint-order: stroke; }
.strip { fill: #ccc; stroke: #999; }
.frame { fill: #fff; stroke: #b8b8b8; }
.facets text { font-family: "Liberation Sans", Arial, sans-serif; fill: #111; }
.strip-text { font-size: 16.2px; }
.tick-text { font-size: 15px; }
.axis-title { font-size: 20px; }
```
FILE: charts.js
```js
// Slider ticks
document.getElementById('ticks').innerHTML = Array.from({ length: 24 }, (_, i) =>
  `<path d="M${Math.round(i * 13.35) + 0.5} 35v5"/>`).join('');

// Faceted bars: name, fill, bar heights in pixels
const facets = [
  ['anti-social-behaviour', '#F8766D', [87.3, 78, 98, 86, 91.3, 101.3]],
  ['burglary', '#DB8E00', [11.3, 10.7, 13.7, 12, 13.3, 15.7]],
  ['criminal-damage-arson', '#AEA200', [9.3, 8, 10.3, 9.3, 10, 9.3]],
  ['drugs', '#64B200', [33.7, 30.7, 30, 21.7, 27, 14.7]],
  ['other-theft', '#00BD5C', [212, 156.3, 201.7, 161.3, 178.3, 166]],
  ['public-disorder-weapons', '#00C1A7', [16.7, 12, 11.7, 10.7, 13, 12]],
  ['robbery', '#00BADE', [11, 8.7, 12, 12, 12, 13]],
  ['shoplifting', '#00A6FF', [11, 12, 15.7, 11.7, 13, 13]],
  ['vehicle-crime', '#B385FF', [5.3, 4.7, 11.3, 8.3, 12.3, 8.3]],
  ['violent-crime', '#EF67EB', [40, 26.7, 32.3, 32.3, 32, 33]],
  ['other-crime', '#FF63B6', [7.3, 6.3, 7.7, 7.7, 8.7, 9.3]]
];
let out = '';
facets.forEach(([name, fill, bars], i) => {
  const x = 2162.3 + (i % 4) * 185.9;
  const y = 154.5 + Math.floor(i / 4) * 251.8;
  const zero = y + 239.2;
  out += `<rect class="frame" x="${x}" y="${y + 17}" width="183.5" height="233"/>`;
  out += `<rect class="strip" x="${x}" y="${y}" width="183.5" height="17"/>`;
  out += `<text class="strip-text" x="${x + 92}" y="${y + 14.5}" text-anchor="middle">${name}</text>`;
  bars.forEach((h, b) => {
    out += `<rect x="${x + 4.4 + b * 29.6}" y="${zero - h}" width="27" height="${h}" fill="${fill}" stroke="#333" stroke-opacity=".8"/>`;
  });
  if (i % 4 === 0) {
    [0, 500, 1000, 1500].forEach(v => {
      const ty = zero - v * 0.11287;
      out += `<path d="M${x - 3} ${ty}h3" stroke="#555"/><text class="tick-text" x="2158" y="${ty + 6}" text-anchor="end">${v}</text>`;
    });
  }
});
document.getElementById('facets').innerHTML = out;

// Street labels: text, centre x, baseline y, rotation, colour
const brown = '#7a4a10';
document.getElementById('labels').innerHTML = [
  ['Margaret St', 242, 634, -14], ['A40', 663, 647, -5], ['A40', 990, 652, -30], ['Oxford St', 70, 745, -8], ['Brook St', 38, 858, -15],
  ['Regent St', 322, 892, 62], ['A4201', 422, 1032, 35], ['A401', 874, 765, -58], ['A4', 328, 1240, 55], ['A4', 710, 1207, -30],
  ['Pall Mall', 497, 1322, -30], ['Strand', 1074, 1070, -35], ['A4', 1167, 1003, -32], ['A3211', 1209, 1118, -48], ["Theobald's Rd", 1300, 398, -20],
  ['A5200', 1512, 365, 72], ['Holborn', 1636, 542, 13], ['A4', 1700, 650, -55], ['A40', 2046, 682, 15], ['Fleet St', 1725, 783, 0], ['Cheapside', 2286, 782, 14],
  ['A1', 2168, 472, 80], ['B100', 2235, 387, -8], ['Strand', 1433, 876, -18], ['A3211', 2314, 992, 8], ['A201', 1853, 1088, 90],
  ['Waterloo Bridge', 1338, 1182, 60], ['Stamford St', 1722, 1272, -17], ['A300', 2290, 1250, -82], ['A3200', 2133, 1356, 12],
  ['The Mall', 572, 1428, -30], ['Whitehall', 908, 1446, 83], ['Birdcage Walk', 510, 1656, -8], ['A302', 432, 1884, -8], ['Millbank', 944, 1918, 80],
  ['A302', 88, 1898, 25, brown], ['A202', 342, 2118, 35, brown], ['A3213', 246, 2210, 33], ['Belgrave Rd', 410, 2328, 36], ["St. George's Dr", 266, 2368, 36],
  ['Sutherland St', 80, 2422, 38], ['A3212', 868, 2380, -38], ['A202', 920, 2520, 35, brown], ['A3036', 1108, 2282, -80], ['Lambeth Rd', 1296, 2022, -17],
  ['A3036', 1270, 1832, -42], ['A23', 1542, 1865, 78], ['Kennington Rd', 1568, 2060, 87], ['A23', 1592, 2258, -88], ['Kenning', 1558, 2500, 88, brown],
  ['A301', 1570, 1484, 50], ['The Cut', 1718, 1520, -25], ['Waterloo Rd', 1724, 1682, 53], ['Blackfriars Rd', 1846, 1545, 90], ['B300', 2100, 1455, -2],
  ['Borough Rd', 2086, 1760, -5], ['A3', 2246, 1712, -38], ['A201', 1880, 1823, 50], ['A3202', 1665, 1803, -5], ['A302', 1740, 1878, 38],
  ['A3', 2043, 1972, 85], ['A201', 2274, 2072, 4, brown], ['Walworth Rd', 2153, 2262, 68], ['Kennington Ln', 1814, 2314, -26, brown],
  ['A3', 1886, 2342, -60, brown], ['A215', 2265, 2530, 68]
].map(([t, x, y, a, c]) => `<text transform="translate(${x} ${y}) rotate(${a})"${c ? ` fill="${c}"` : ''}>${t}</text>`).join('');

const stations = {
  tube: [[253, 703], [578, 355], [216, 1236], [1561, 460], [2147, 736], [1444, 928], [1890, 921], [2317, 902], [2118, 350], [959, 1574], [611, 1715], [201, 1921], [604, 2390], [1815, 1430], [1529, 1763], [2345, 1609], [2034, 2039], [1802, 2439]],
  tubeHot: [[748, 640], [1178, 549], [1006, 838], [834, 948], [602, 1036], [884, 1206], [1054, 1203], [1396, 1473]],
  rail: [[990, 1167], [1835, 381], [1905, 786], [1942, 921], [1045, 2551], [1675, 1423], [1448, 1473], [2113, 2072]]
};
document.getElementById('stations').innerHTML = Object.entries(stations).map(([id, pts]) =>
  pts.map(([x, y]) => `<use href="#${id}" x="${x}" y="${y}"/>`).join('')).join('');
```
